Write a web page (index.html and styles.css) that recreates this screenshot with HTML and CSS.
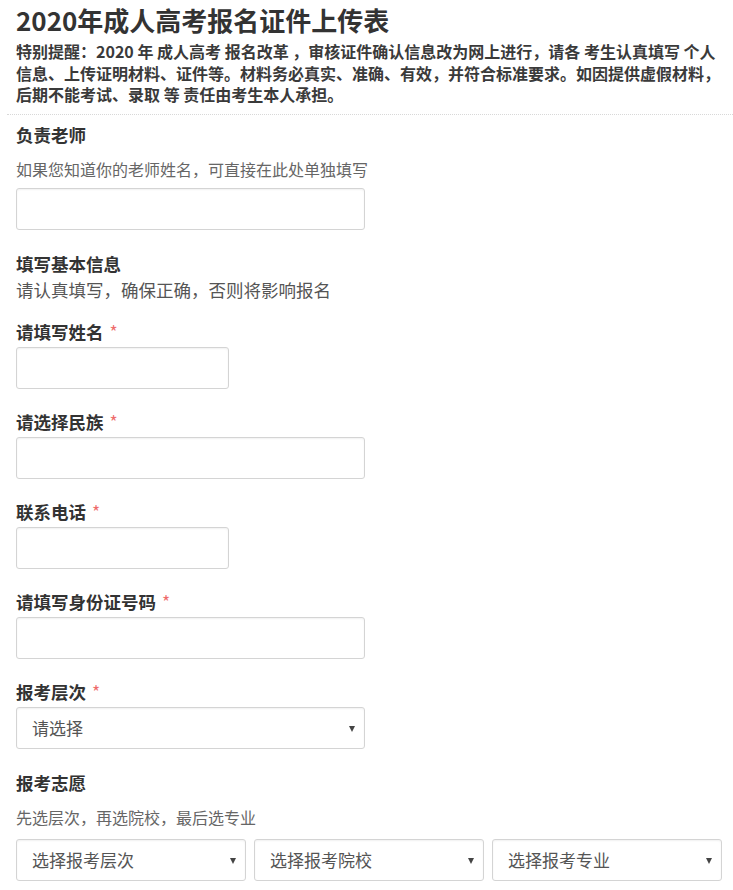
FILE: index.html
```html
<!DOCTYPE html>
<html lang="zh-CN">
<head>
    <meta charset="UTF-8">
    <meta name="viewport" content="width=device-width, initial-scale=1.0">
    <title>2020年成人高考报名证件上传表</title>
    <link rel="stylesheet" href="styles.css">
</head>
<body>
    <div class="page">
        <div class="header">
            <h1>2020年成人高考报名证件上传表</h1>
            <p class="notice">特别提醒：2020 年 成人高考 报名改革 ，审核证件确认信息改为网上进行，请各 考生认真填写 个人信息、上传证明材料、证件等。材料务必真实、准确、有效，并符合标准要求。如因提供虚假材料，后期不能考试、录取 等 责任由考生本人承担。</p>
        </div>

        <!-- 负责老师 -->
        <div class="field teacher">
            <div class="label">负责老师</div>
            <div class="help">如果您知道你的老师姓名，可直接在此处单独填写</div>
            <input type="text" class="input wide">
        </div>

        <div class="section">
            <div class="label">填写基本信息</div>
            <div class="subtitle">请认真填写，确保正确，否则将影响报名</div>
        </div>

        <div class="field first">
            <div class="label">请填写姓名 <span class="req">*</span></div>
            <input type="text" class="input short">
        </div>

        <div class="field">
            <div class="label">请选择民族 <span class="req">*</span></div>
            <input type="text" class="input wide">
        </div>

        <div class="field">
            <div class="label">联系电话 <span class="req">*</span></div>
            <input type="text" class="input short">
        </div>

        <div class="field">
            <div class="label">请填写身份证号码 <span class="req">*</span></div>
            <input type="text" class="input wide">
        </div>

        <div class="field">
            <div class="label">报考层次 <span class="req">*</span></div>
            <div class="select-box wide">
                <select class="input">
                    <option>请选择</option>
                </select>
            </div>
        </div>

        <!-- 报考志愿 -->
        <div class="field choice">
            <div class="label">报考志愿</div>
            <div class="help choice-help">先选层次，再选院校，最后选专业</div>
            <div class="choice-row">
                <div class="select-box">
                    <select class="input"><option>选择报考层次</option></select>
                </div>
                <div class="select-box">
                    <select class="input"><option>选择报考院校</option></select>
                </div>
                <div class="select-box">
                    <select class="input"><option>选择报考专业</option></select>
                </div>
            </div>
        </div>
    </div>
</body>
</html>
```

FILE: styles.css
```css
body {
    font-family: "Noto Sans CJK SC", "Liberation Sans", sans-serif;
    background-color: #ffffff;
    color: #333333;
    margin: 0;
    padding: 0;
}

.page {
    padding: 2px 11px 20px 16px;
}

.header {
    margin-left: -9px;
    padding-left: 9px;
    margin-right: -11px;
    padding-right: 5px;
    padding-bottom: 8px;
    border-bottom: 1px dotted #d8d8d8;
}

h1 {
    margin: 0;
    font-size: 26px;
    line-height: 36px;
    font-weight: bold;
    color: #333333;
}

.notice {
    margin: 3px 0 0;
    font-size: 16px;
    line-height: 21.5px;
    font-weight: bold;
    color: #3a3a3a;
}

.label {
    font-size: 17.5px;
    line-height: 24px;
    font-weight: bold;
    color: #333333;
    margin-bottom: 3px;
}

.req {
    color: #ee6b6b;
    font-weight: normal;
    margin-left: 2px;
}

.help {
    font-size: 16px;
    line-height: 24px;
    color: #666666;
}

.subtitle {
    font-size: 17.5px;
    line-height: 24px;
    color: #555555;
}

.field {
    margin-top: 21px;
}

.teacher {
    margin-top: 8px;
}

.teacher .label {
    margin-bottom: 10px;
}

.teacher .help {
    margin-bottom: 7px;
}

.section {
    margin-top: 22px;
}

.section .label {
    margin-bottom: 2px;
}

.field.first {
    margin-top: 18px;
}

.input {
    display: block;
    box-sizing: border-box;
    height: 42px;
    width: 100%;
    border: 1px solid #d4d4d4;
    border-radius: 3px;
    box-shadow: inset 0 1px 2px rgba(0, 0, 0, 0.06);
    background-color: #ffffff;
    font-family: inherit;
    font-size: 17px;
    color: #555555;
    padding: 0 15px;
    margin: 0;
}

input.wide, .select-box.wide {
    width: 349px;
}

input.short {
    width: 213px;
}

.select-box {
    position: relative;
}

.select-box select {
    appearance: none;
    -webkit-appearance: none;
    outline: none;
}

.select-box::after {
    content: "";
    position: absolute;
    right: 10px;
    top: 19px;
    border-left: 3.5px solid transparent;
    border-right: 3.5px solid transparent;
    border-top: 6px solid #444444;
    pointer-events: none;
}

.field.choice {
    margin-top: 22px;
}

.choice-help {
    margin-top: 10px;
    margin-bottom: 10px;
}

.choice-row {
    display: grid;
    grid-template-columns: 1fr 1fr 1fr;
    gap: 8px;
}
```
